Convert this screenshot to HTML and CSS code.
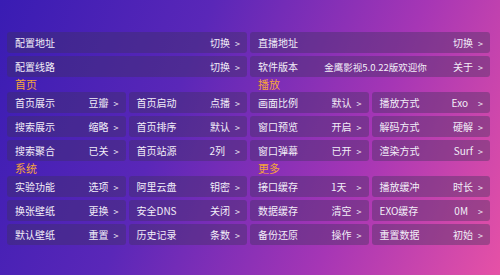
FILE: index.html
```html
<!DOCTYPE html>
<html lang="zh-CN">
<head>
<meta charset="UTF-8">
<meta name="viewport" content="width=device-width, initial-scale=1.0">
<title>设置</title>
<link rel="stylesheet" href="styles.css">
</head>
<body>

<div class="screen">
    <div class="wide">
        <div class="item"><span class="name">配置地址</span><span class="value">切换<i>&gt;</i></span></div>
        <div class="item"><span class="name">直播地址</span><span class="value">切换<i>&gt;</i></span></div>
        <div class="item"><span class="name">配置线路</span><span class="value">切换<i>&gt;</i></span></div>
        <div class="item"><span class="name">软件版本</span><span class="info">金鹰影视5.0.22版欢迎你</span><span class="value">关于<i>&gt;</i></span></div>
    </div>

    <div class="heads">
        <div class="head">首页</div>
        <div class="head">播放</div>
    </div>
    <div class="cells">
        <div class="item"><span class="name">首页展示</span><span class="value">豆瓣<i>&gt;</i></span></div>
        <div class="item"><span class="name">首页启动</span><span class="value">点播<i>&gt;</i></span></div>
        <div class="item"><span class="name">画面比例</span><span class="value">默认<i>&gt;</i></span></div>
        <div class="item"><span class="name">播放方式</span><span class="value">Exo<i class="far">&gt;</i></span></div>
        <div class="item"><span class="name">搜索展示</span><span class="value">缩略<i>&gt;</i></span></div>
        <div class="item"><span class="name">首页排序</span><span class="value">默认<i>&gt;</i></span></div>
        <div class="item"><span class="name">窗口预览</span><span class="value">开启<i>&gt;</i></span></div>
        <div class="item"><span class="name">解码方式</span><span class="value">硬解<i>&gt;</i></span></div>
        <div class="item"><span class="name">搜索聚合</span><span class="value">已关<i>&gt;</i></span></div>
        <div class="item"><span class="name">首页站源</span><span class="value">2列<i class="far">&gt;</i></span></div>
        <div class="item"><span class="name">窗口弹幕</span><span class="value">已开<i>&gt;</i></span></div>
        <div class="item"><span class="name">渲染方式</span><span class="value">Surf<i>&gt;</i></span></div>
    </div>

    <div class="heads">
        <div class="head">系统</div>
        <div class="head">更多</div>
    </div>
    <div class="cells">
        <div class="item"><span class="name">实验功能</span><span class="value">选项<i>&gt;</i></span></div>
        <div class="item"><span class="name">阿里云盘</span><span class="value">钥密<i>&gt;</i></span></div>
        <div class="item"><span class="name">接口缓存</span><span class="value">1天<i class="far">&gt;</i></span></div>
        <div class="item"><span class="name">播放缓冲</span><span class="value">时长<i>&gt;</i></span></div>
        <div class="item"><span class="name">换张壁纸</span><span class="value">更换<i>&gt;</i></span></div>
        <div class="item"><span class="name">安全DNS</span><span class="value">关闭<i>&gt;</i></span></div>
        <div class="item"><span class="name">数据缓存</span><span class="value">清空<i>&gt;</i></span></div>
        <div class="item"><span class="name">EXO缓存</span><span class="value">0M<i class="far">&gt;</i></span></div>
        <div class="item"><span class="name">默认壁纸</span><span class="value">重置<i>&gt;</i></span></div>
        <div class="item"><span class="name">历史记录</span><span class="value">条数<i>&gt;</i></span></div>
        <div class="item"><span class="name">备份还原</span><span class="value">操作<i>&gt;</i></span></div>
        <div class="item"><span class="name">重置数据</span><span class="value">初始<i>&gt;</i></span></div>
    </div>
</div>

</body>
</html>
```

FILE: styles.css
```css
html, body {
    margin: 0;
    padding: 0;
}
body {
    width: 500px;
    height: 275px;
    overflow: hidden;
    font-family: "Noto Sans CJK SC", "Noto Sans", sans-serif;
    background: linear-gradient(112deg, #391cb3 0%, #5a27b8 35%, #a636b5 70%, #e651a6 100%);
    color: #f2eef8;
}
.screen {
    padding: 32px 10px 0 7px;
}
.wide {
    display: grid;
    grid-template-columns: 1fr 1fr;
    gap: 3px;
}
.cells {
    display: grid;
    grid-template-columns: repeat(4, 1fr);
    gap: 3px;
}
.item {
    height: 21px;
    display: flex;
    align-items: center;
    justify-content: space-between;
    padding: 0 7px 0 8px;
    background-color: rgba(60, 50, 90, 0.38);
    border-radius: 3px;
    font-size: 10px;
    white-space: nowrap;
}
.value i {
    font-style: normal;
    font-size: 9px;
    margin-left: 5px;
}
.value i.far {
    margin-left: 10px;
}
.info {
    font-size: 9.5px;
}
.heads {
    display: grid;
    grid-template-columns: 1fr 1fr;
    gap: 3px;
    height: 15px;
}
.head {
    padding-left: 8px;
    font-size: 11px;
    line-height: 15px;
    color: #f4a43a;
}
```
